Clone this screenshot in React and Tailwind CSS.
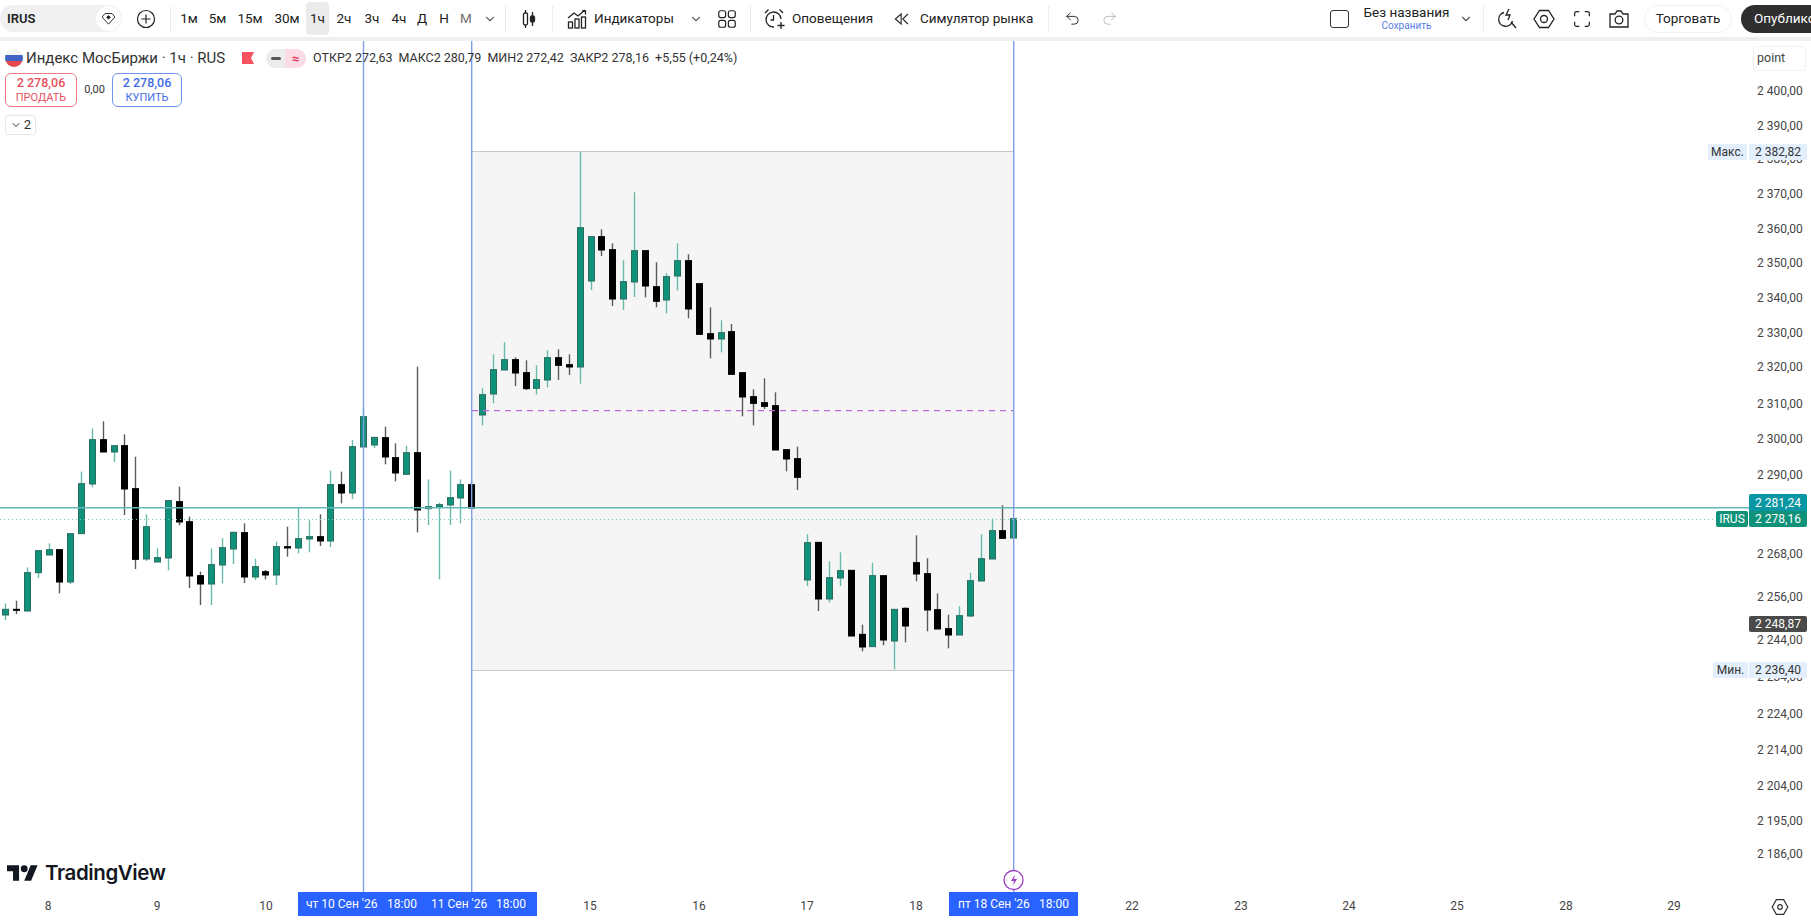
import { ChevronDown, Undo2, Redo2 } from 'lucide-react';

// candles read off the chart: [up, wickTop, bodyTop, bodyBottom, wickBottom], at 3x from offset y
const toPx = (offset, rows) =>
  rows.map(([up, a, b, c, d]) => [up, offset + a / 3, offset + b / 3, offset + c / 3, offset + d / 3]);

const candles = [
  ...toPx(360, [
    [1, 730, 748, 765, 780], [0, 722, 748, 750, 762], [1, 622, 638, 753, 755], [1, 572, 572, 638, 654],
    [1, 550, 569, 585, 585], [0, 569, 569, 666, 700], [1, 521, 521, 666, 672], [1, 335, 371, 521, 521],
    [1, 205, 239, 372, 382], [0, 184, 239, 276, 276], [1, 255, 257, 276, 306], [0, 223, 257, 387, 465],
    [0, 290, 386, 598, 627], [1, 463, 500, 597, 603], [1, 565, 593, 606, 606], [1, 422, 422, 594, 631],
    [0, 380, 425, 486, 496], [0, 470, 485, 648, 684], [0, 635, 647, 672, 735], [1, 565, 614, 672, 735],
    [1, 535, 563, 615, 670], [1, 515, 517, 567, 612], [0, 490, 518, 651, 669], [1, 596, 620, 651, 660],
    [0, 630, 635, 645, 658], [1, 545, 560, 645, 675], [0, 500, 560, 564, 590], [1, 445, 536, 564, 580],
    [1, 481, 530, 537, 577], [0, 463, 530, 543, 558], [1, 332, 374, 543, 561], [0, 335, 374, 399, 430],
    [1, 240, 260, 399, 417], [1, 145, 170, 261, 262], [1, 232, 232, 255, 264], [0, 200, 233, 291, 313],
    [0, 250, 293, 339, 364], [1, 257, 278, 343, 345], [0, 20, 278, 450, 517], [1, 358, 440, 446, 495],
    [1, 428, 434, 441, 658], [1, 332, 413, 435, 495], [1, 358, 374, 414, 490], [0, 365, 374, 444, 444],
  ]),
  ...toPx(140, [
    [1, 745, 764, 825, 856], [1, 643, 689, 762, 790], [1, 607, 659, 690, 690], [0, 652, 659, 699, 738],
    [0, 661, 698, 746, 750], [1, 676, 719, 745, 763], [1, 631, 653, 720, 742], [0, 628, 653, 676, 720],
    [0, 643, 674, 681, 705], [1, 35, 263, 681, 731], [1, 290, 290, 423, 450], [0, 268, 290, 330, 348],
    [0, 310, 329, 477, 498], [1, 361, 425, 477, 510], [1, 157, 332, 426, 471], [0, 332, 332, 438, 472],
    [0, 367, 440, 484, 502], [1, 400, 410, 480, 520], [1, 310, 362, 408, 451], [0, 343, 362, 507, 535],
    [0, 431, 431, 583, 583], [0, 502, 581, 597, 655], [1, 541, 578, 597, 637], [0, 552, 575, 703, 703],
    [0, 698, 698, 771, 829], [0, 748, 770, 790, 856], [0, 715, 788, 799, 807], [0, 757, 797, 930, 930],
    [0, 929, 929, 957, 994], [0, 920, 956, 1012, 1050],
  ]),
  ...toPx(480, [
    [1, 163, 188, 300, 318], [0, 187, 187, 357, 393], [1, 244, 293, 357, 367], [1, 217, 272, 294, 318],
    [0, 271, 271, 468, 468], [0, 434, 463, 501, 514], [1, 248, 287, 500, 500], [0, 287, 287, 480, 496],
    [1, 388, 388, 483, 568], [0, 382, 385, 438, 487], [0, 166, 248, 282, 304], [0, 235, 281, 390, 454],
    [0, 340, 389, 447, 447], [0, 404, 446, 465, 505], [1, 379, 407, 465, 465], [1, 278, 302, 408, 412],
    [1, 163, 236, 303, 303], [1, 116, 152, 237, 237], [0, 76, 152, 175, 175], [1, 116, 116, 174, 174],
  ]),
];

const priceLabels = [
  ['2 400,00', 91], ['2 390,00', 126], ['2 380,00', 159], ['2 370,00', 194], ['2 360,00', 229], ['2 350,00', 263],
  ['2 340,00', 298], ['2 330,00', 333], ['2 320,00', 367], ['2 310,00', 404], ['2 300,00', 439],
  ['2 290,00', 475], ['2 268,00', 554], ['2 256,00', 597], ['2 244,00', 640], ['2 234,00', 677],
  ['2 224,00', 714], ['2 214,00', 750], ['2 204,00', 786], ['2 195,00', 821], ['2 186,00', 854],
];

const dayTicks = [
  ['8', 48], ['9', 157], ['10', 266], ['15', 590], ['16', 699], ['17', 807], ['18', 916],
  ['22', 1132], ['23', 1241], ['24', 1349], ['25', 1457], ['28', 1566], ['29', 1674],
];

const intervals = [
  ['1м', 'w-[28px]'], ['5м', 'w-[29px]'], ['15м', 'w-[36px]'], ['30м', 'w-[38px]'],
  ['1ч', 'w-[23px] bg-[#ebebeb] rounded'], ['2ч', 'w-[30px]'], ['3ч', 'w-[26px]'], ['4ч', 'w-[28px]'],
  ['Д', 'w-[18px]'], ['Н', 'w-[26px]'], ['М', 'w-[18px] text-[#707070]'],
];

const Sep = ({ className = '' }) => <div className={`w-px h-[26px] bg-[#ececec] shrink-0 ${className}`} />;

const Ico = ({ size = 24, className = '', children }) => (
  <svg
    width={size}
    height={size}
    viewBox="0 0 24 24"
    fill="none"
    stroke="currentColor"
    strokeWidth="1.3"
    className={`shrink-0 ${className}`}
  >
    {children}
  </svg>
);

function Toolbar() {
  return (
    <div className="h-[37px] shrink-0 flex items-center text-[13.5px] text-[#222] whitespace-nowrap [&>*]:shrink-0">
      <div className="w-[122px] h-[27px] rounded-full bg-[#f0f0f0] flex items-center justify-between pl-[7px] pr-[1px]">
        <span className="font-semibold text-[13px]">IRUS</span>
        <span className="w-[25px] h-[25px] rounded-full bg-white flex items-center justify-center">
          <Ico size={17}>
            <path d="M7 5h10l4 5-9 10-9-10z" />
            <path d="M9.5 10 12 8l2.5 2-2.5 3z" fill="currentColor" />
          </Ico>
        </span>
      </div>
      <div className="w-[24px] ml-[12px] flex justify-center">
        <Ico size={22}>
          <circle cx="12" cy="12" r="9.3" />
          <path d="M12 7v10M7 12h10" />
        </Ico>
      </div>
      <Sep className="ml-[12px]" />
      <div className="flex h-[33px] ml-[4px] [&>*]:shrink-0">
        {intervals.map(([label, cls]) => (
          <div key={label} className={`flex items-center justify-center ${cls}`}>
            {label}
          </div>
        ))}
        <div className="w-[29px] flex items-center justify-center text-[#666]">
          <ChevronDown size={14} />
        </div>
      </div>
      <Sep className="ml-[1px]" />
      <div className="w-[46px] flex justify-center">
        <Ico size={24}>
          <path d="M8.5 3v3M8.5 18v3M15.5 5v4M15.5 15v4" />
          <rect x="6.5" y="6" width="4" height="12" rx="1.5" />
          <rect x="13.5" y="9" width="4" height="6" rx="1.5" fill="currentColor" />
        </Ico>
      </div>
      <Sep />
      <div className="w-[24px] ml-[12px] flex justify-center">
        <Ico size={24}>
          <path d="M3 11 9 6l4 3 7-6" />
          <path d="M17 4h3.5v3.5" />
          <rect x="3.5" y="15" width="4" height="6" />
          <rect x="10" y="12" width="4" height="9" />
          <rect x="16.5" y="10" width="4" height="11" />
        </Ico>
      </div>
      <span className="ml-[5px] w-[80px]">Индикаторы</span>
      <div className="w-[44px] flex justify-center text-[#666]">
        <ChevronDown size={14} />
      </div>
      <div className="w-[20px] flex justify-center -ml-[1px]">
        <Ico size={22}>
          <rect x="3" y="3" width="7.5" height="7.5" rx="2.2" />
          <rect x="13.5" y="3" width="7.5" height="7.5" rx="2.2" />
          <rect x="3" y="13.5" width="7.5" height="7.5" rx="2.2" />
          <rect x="13.5" y="13.5" width="7.5" height="7.5" rx="2.2" />
        </Ico>
      </div>
      <Sep className="ml-[13px]" />
      <div className="w-[24px] ml-[11px] flex justify-center">
        <Ico size={24}>
          <path d="M19 12a7.5 7.5 0 1 0-7 8" />
          <path d="M11.5 8v5h-3M3 6l3.5-3.5M21 6l-3.5-3.5M19 15v7M15.5 18.5h7" />
        </Ico>
      </div>
      <span className="ml-[6px] w-[82px]">Оповещения</span>
      <div className="w-[20px] ml-[18px] flex justify-center">
        <Ico size={20}>
          <path d="M11 6 4 12l7 6zM19 6l-6 6 6 6" />
        </Ico>
      </div>
      <span className="ml-[8px] w-[113px]">Симулятор рынка</span>
      <Sep className="ml-[15px]" />
      <div className="w-[24px] ml-[11px] flex justify-center">
        <Undo2 size={17} strokeWidth={1.3} />
      </div>
      <div className="w-[24px] ml-[13px] flex justify-center text-[#b5b5b5]">
        <Redo2 size={17} strokeWidth={1.3} />
      </div>
      <div className="w-[19px] h-[18px] ml-[209px] rounded-[3px] border-[1.5px] border-[#333]" />
      <div className="ml-[15px] w-[85px] flex flex-col items-center leading-none">
        <span className="text-[13.5px]">Без названия</span>
        <span className="text-[10px] text-[#5b7ee5] mt-[1px]">Сохранить</span>
      </div>
      <div className="w-[34px] flex justify-center text-[#555]">
        <ChevronDown size={14} />
      </div>
      <Sep />
      <div className="w-[24px] ml-[11px] flex justify-center">
        <Ico size={24}>
          <path d="M9 5.5a7 7 0 1 0 8.5 8.5" />
          <path d="m16 15 5 6" />
          <path d="M14 2l-3 6h4l-2 5" />
        </Ico>
      </div>
      <div className="w-[24px] ml-[13px] flex justify-center">
        <Ico size={24}>
          <path d="M7.5 3.5h9L22 12l-5.500 8.500h-9L2 12z" />
          <circle cx="12" cy="12" r="3.500" />
        </Ico>
      </div>
      <div className="w-[24px] ml-[14px] flex justify-center">
        <Ico size={22}>
          <path d="M4 9V6a2 2 0 0 1 2-2h3M15 4h3a2 2 0 0 1 2 2v3M20 15v3a2 2 0 0 1-2 2h-3M9 20H6a2 2 0 0 1-2-2v-3" />
        </Ico>
      </div>
      <div className="w-[24px] ml-[13px] flex justify-center">
        <Ico size={24}>
          <path d="M3 7h5l2-3h4l2 3h5v13H3z" />
          <circle cx="12" cy="13" r="3.800" />
        </Ico>
      </div>
      <div className="ml-[13px] w-[88px] h-[28px] rounded-full border border-[#f0f0f0] flex items-center justify-center">
        Торговать
      </div>
      <div className="ml-[9px] w-[110px] h-[28px] rounded-full bg-[#2e2e2e] text-white flex items-center pl-[13px]">
        Опубликовать
      </div>
    </div>
  );
}

function Legend() {
  return (
    <div className="absolute left-[5px] top-[6px] text-[#333]">
      <div className="flex items-center h-[22px]">
        <svg width="18" height="18" viewBox="0 0 18 18" className="shrink-0">
          <clipPath id="flag">
            <circle cx="9" cy="9" r="9" />
          </clipPath>
          <g clipPath="url(#flag)">
            <rect width="18" height="6" fill="#f2f2f2" />
            <rect y="6" width="18" height="6" fill="#3f62c4" />
            <rect y="12" width="18" height="6" fill="#e5484d" />
          </g>
        </svg>
        <span className="ml-[3px] w-[216px] text-[15px] whitespace-nowrap">Индекс МосБиржи · 1ч · RUS</span>
        <svg width="12" height="12" viewBox="0 0 12 12" className="shrink-0">
          <path d="M0 0h12L9 6l3 6H0z" fill="#f7525f" />
        </svg>
        <div className="ml-[12px] w-[40px] h-[19px] rounded-full bg-[#ececec] flex overflow-hidden shrink-0">
          <div className="w-[19px] flex items-center justify-center">
            <div className="w-[10px] h-[3px] rounded-sm bg-[#555]" />
          </div>
          <div className="flex-1 bg-[#fbdce4] text-[#e0335e] flex items-center justify-center text-[13px] font-bold leading-none">≈</div>
        </div>
        <div className="ml-[7px] text-[12.500px] whitespace-nowrap flex gap-[6px]">
          <span>ОТКР2 272,63</span>
          <span>МАКС2 280,79</span>
          <span>МИН2 272,42</span>
          <span>ЗАКР2 278,16</span>
          <span>+5,55 (+0,24%)</span>
        </div>
      </div>
      <div className="flex items-center mt-[4px]">
        <div className="w-[72px] h-[34px] rounded-md border border-[#ee7c86] text-[#e8505d] flex flex-col items-center justify-center leading-[15px]">
          <span className="text-[12.500px] font-medium">2 278,06</span>
          <span className="text-[11px]">ПРОДАТЬ</span>
        </div>
        <span className="w-[35px] text-center text-[11px]">0,00</span>
        <div className="w-[70px] h-[34px] rounded-md border border-[#6f93ee] text-[#3f6ce8] flex flex-col items-center justify-center leading-[15px]">
          <span className="text-[12.500px] font-medium">2 278,06</span>
          <span className="text-[11px]">КУПИТЬ</span>
        </div>
      </div>
      <div className="mt-[8px] w-[31px] h-[20px] rounded-[3px] border border-[#e6e6e6] flex items-center justify-center gap-[2px] text-[13px]">
        <ChevronDown size={12} />
        <span>2</span>
      </div>
    </div>
  );
}

function ChartSvg() {
  return (
    <svg viewBox="0 41 1811 879" className="absolute inset-0 w-full h-full">
      <rect x="472" y="152" width="542" height="518" fill="#f5f5f5" />
      <path d="M472 151.500h542M472 670.500h542" stroke="#c6c6c6" />
      {candles.map(([up, wt, bt, bb, wb], i) => {
        const c = 5.7 + i * 10.84;
        const left = Math.round(c - 3.5);
        return (
          <g key={i}>
            <rect x={left + 2.8} y={wt} width="1.4" height={wb - wt} fill={up ? '#68baaa' : '#5a5a5a'} />
            <rect
              x={left + 0.5}
              y={bt}
              width="6"
              height={Math.max(bb - bt, 1)}
              fill={up ? '#0f9279' : '#000'}
              stroke={up ? '#2a6b60' : '#000'}
            />
          </g>
        );
      })}
      <path d="M472 410.700h542" stroke="#bb6bd9" strokeWidth="1.300" strokeDasharray="6 5" />
      <path d="M0 507.700h1749" stroke="#62b8b8" strokeWidth="1.500" />
      <path d="M0 519.500h1716" stroke="#7cc8b8" strokeDasharray="1 3" />
      <path d="M363.500 41v851M471.700 41v851M1013.700 41v829M1013.700 890v2" stroke="#7d9ee8" strokeWidth="1.400" />
      <circle cx="1013.500" cy="880" r="9.500" fill="#fff" stroke="#9c3fc0" strokeWidth="1.300" />
      <path d="M1015 874.500l-4 6.500h3l-1 4.500 4-6.500h-3z" fill="#9c3fc0" />
    </svg>
  );
}

const Tag = ({ top, className, children }) => (
  <div
    style={{ top: top - 41 }}
    className={`absolute h-[16px] flex items-center justify-center text-[12px] leading-none ${className}`}
  >
    {children}
  </div>
);

function PriceAxis() {
  return (
    <div className="absolute inset-0 text-[12px] text-[#444] pointer-events-none">
      <div className="absolute left-[1753px] top-[5px] w-[53px] h-[25px] rounded-[3px] border border-[#f0f0f0] flex items-center pl-[3px] text-[12.500px]">
        point
      </div>
      {priceLabels.map(([label, y]) => (
        <div key={label} style={{ top: y - 41 - 8 }} className="absolute left-[1757px] h-[16px] leading-[16px] whitespace-nowrap">
          {label}
        </div>
      ))}
      <Tag top={144} className="left-[1708px] w-[39px] bg-[#e3effd] text-[11.500px] text-[#333]">Макс.</Tag>
      <Tag top={144} className="left-[1749px] w-[58px] bg-[#e3effd] text-[#333]">2 382,82</Tag>
      <Tag top={494} className="left-[1749px] w-[58px] h-[17px] rounded-t-[2px] bg-[#0b96a3] text-white">2 281,24</Tag>
      <Tag top={511} className="left-[1716px] w-[32px] rounded-[2px] bg-[#0f9279] text-white">IRUS</Tag>
      <Tag top={511} className="left-[1749px] w-[58px] rounded-b-[2px] bg-[#0f9279] text-white">2 278,16</Tag>
      <Tag top={616} className="left-[1749px] w-[58px] rounded-[2px] bg-[#4a4a4a] text-white">2 248,87</Tag>
      <Tag top={662} className="left-[1713px] w-[35px] bg-[#e3effd] text-[11.500px] text-[#333]">Мин.</Tag>
      <Tag top={662} className="left-[1749px] w-[58px] bg-[#e3effd] text-[#333]">2 236,40</Tag>
    </div>
  );
}

function TimeAxis() {
  return (
    <div className="absolute left-0 right-0 bottom-0 h-[34px] text-[12px] text-[#444]">
      {dayTicks.map(([label, x]) => (
        <span key={label} style={{ left: x }} className="absolute top-[12px] -translate-x-1/2 leading-4">
          {label}
        </span>
      ))}
      <div className="absolute left-[298px] top-[6px] w-[239px] h-[24px] bg-[#2962ff] text-white flex items-center pl-[8px] whitespace-nowrap">
        <span className="w-[81px]">чт 10 Сен '26</span>
        <span className="w-[44px]">18:00</span>
        <span className="w-[65px]">11 Сен '26</span>
        <span>18:00</span>
      </div>
      <div className="absolute left-[949px] top-[6px] w-[129px] h-[24px] bg-[#2962ff] text-white flex items-center pl-[9px] whitespace-nowrap">
        <span className="w-[81px]">пт 18 Сен '26</span>
        <span>18:00</span>
      </div>
      <div className="absolute left-[1769px] top-[10px] text-[#333]">
        <Ico size={22}>
          <path d="M8 4h8l4.500 8-4.500 8H8l-4.500-8z" />
          <circle cx="12" cy="12" r="2.500" />
        </Ico>
      </div>
    </div>
  );
}

export default function App() {
  return (
    <div className="w-[1811px] h-[920px] overflow-hidden bg-white flex flex-col font-['Roboto',sans-serif]">
      <Toolbar />
      <div className="h-[4px] shrink-0 bg-[#efefef]" />
      <div className="flex-1 relative">
        <ChartSvg />
        <Legend />
        <PriceAxis />
        <TimeAxis />
        <div className="absolute left-[7px] bottom-[37px] flex items-center gap-[7px] text-[#131722]">
          <svg width="31" height="16" viewBox="0 4 36 18" className="shrink-0" fill="currentColor">
            <path d="M14 22H7V11H0V4h14v18zM28 22h-8l7.500-18h8L28 22z" />
            <circle cx="20" cy="8" r="4" />
          </svg>
          <span className="text-[20.500px] font-['Inter',sans-serif] font-semibold leading-none tracking-[-0.4px]">TradingView</span>
        </div>
      </div>
    </div>
  );
}
